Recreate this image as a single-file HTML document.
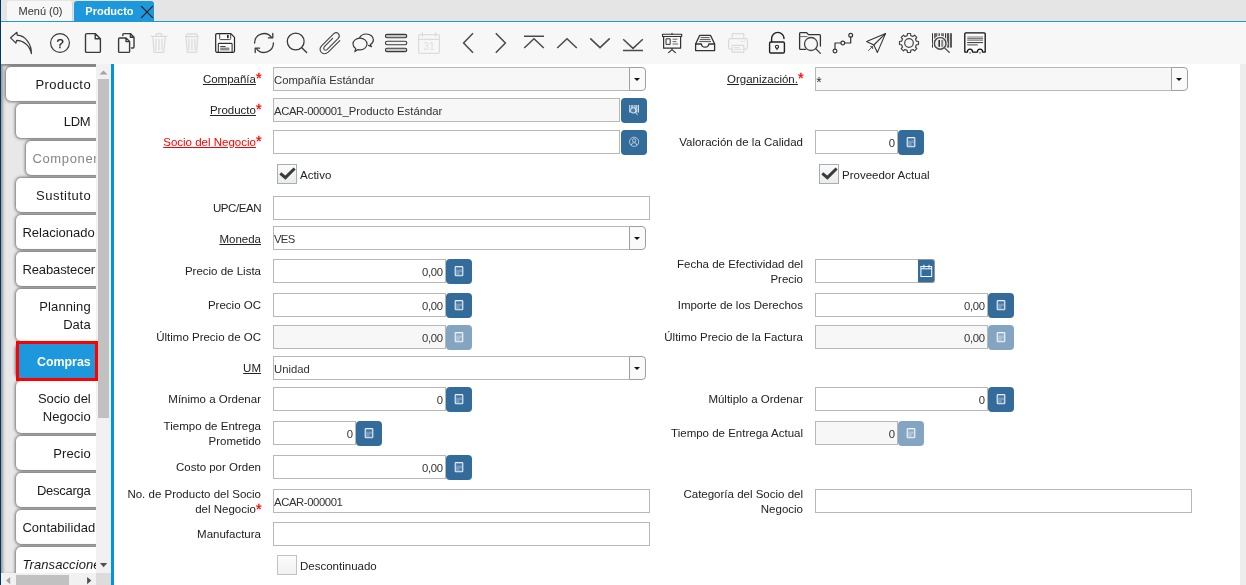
<!DOCTYPE html>
<html lang="es"><head><meta charset="utf-8"><title>Producto</title>
<style>
*{box-sizing:border-box;margin:0;padding:0}
html,body{width:1246px;height:585px;overflow:hidden;background:#fff;font-family:"Liberation Sans",sans-serif;}
body{position:relative;will-change:transform}
.abs{position:absolute}
#leftedge{left:0;top:0;width:1px;height:585px;background:#003366}
#tabbar{left:1px;top:0;width:1245px;height:21px;background:#e5e5e5}
#tabline{left:1px;top:21px;width:1245px;height:1px;background:#1e98dc}
#tab-menu{left:7px;top:1px;width:66px;height:20px;background:#f7f7f7;border-radius:3px 3px 0 0;font-size:11px;color:#333;line-height:20px;padding-left:11.5px;border-right:1px solid #d4d4d4}
#tab-prod{left:74px;top:1px;width:80px;height:21px;background:#1e98dc;border-radius:3px 3px 0 0;font-size:11px;font-weight:bold;color:#fff;line-height:20px;padding-left:11.3px}
#toolbar{left:1px;top:22px;width:1245px;height:42px;background:#f7f7f7}
#side{left:1px;top:64px;width:95px;height:509px;background:#e8e8e8;overflow:hidden;box-shadow:inset 3px 0 3px -1px #999,inset 0 3px 2px -1px #8c8c8c}
.stab{position:absolute;width:120px;height:34px;background:#fff;border-radius:5px 0 0 5px;box-shadow:0 0 3px 1px rgba(0,0,0,.5);font-size:13px;letter-spacing:0.15px;color:#1a1a1a;white-space:nowrap}
.stab span{position:absolute;left:6.4px;text-align:right;line-height:18px;height:18px;display:block}
#vscroll{left:96px;top:64px;width:15px;height:509px;background:#f1f1f1}
#vthumb{left:98px;top:79px;width:11px;height:339px;background:#c1c1c1}
#hscroll{left:1px;top:573px;width:95px;height:12px;background:#f1f1f1}
#hthumb{left:16.3px;top:575px;width:52.5px;height:10px;background:#c1c1c1}
#corner{left:96px;top:573px;width:15px;height:12px;background:#dcdcdc}
#redbox{left:16px;top:341px;width:82px;height:40px;border:3px solid #f00}
#blueline{left:111px;top:64px;width:3px;height:521px;background:#0094dc}
#rightstrip{left:1240px;top:64px;width:6px;height:521px;background:#ededed}
.lbl{position:absolute;font-size:11.5px;color:#222;text-align:right;white-space:nowrap;line-height:15px}
.lbl u{text-decoration:underline;text-underline-offset:1px}
.lbl .req{color:#f00;text-decoration:none;font-size:14.5px;line-height:10px;position:relative;top:0.8px;letter-spacing:-0.6px;-webkit-text-stroke:0.3px #f00}
.inp{position:absolute;height:24px;border:1px solid #b8b8b8;background:#fff;font-size:11.3px;color:#333;line-height:24px;padding-left:0px;white-space:nowrap;overflow:hidden}
.inp.ro{background:#f7f7f7}
.inp.num{text-align:right;padding-right:2.3px;letter-spacing:-0.3px}
.cbtn{position:absolute;width:17px;height:24px;border:1px solid #a0a0a0;border-left:1px solid #a0a0a0;border-radius:0 4px 4px 0;background:#fafafa}
.cbtn:after{content:"";position:absolute;left:4px;top:10px;border-left:3.5px solid transparent;border-right:3.5px solid transparent;border-top:3.5px solid #111}
.bbtn{position:absolute;width:26px;height:25px;background:#336b9b;border-radius:4px}
.bbtn.dis{opacity:.6}
.calbtn{position:absolute;width:17px;height:24px;background:#336b9b;border:1px solid #9a948e;border-left:none;border-radius:0 3px 3px 0}
.chk{position:absolute;width:20px;height:20px;border:1px solid #a4aeb9;background:linear-gradient(#fbfbfb,#ebebeb)}
.chk.off{border-color:#c2c2c2;background:linear-gradient(#fcfcfc,#f1f1f1)}
.tight{letter-spacing:-0.4px}
.chklbl{position:absolute;font-size:11.5px;color:#222;line-height:15px;white-space:nowrap}
</style></head>
<body>
<div class="abs" id="tabbar"></div>
<div class="abs" id="tab-menu">Menú (0)</div>
<div class="abs" id="tab-prod">Producto<svg class="abs" style="left:66px;top:4px" width="14" height="14" viewBox="0 0 14 14"><path d="M1.2 1.2L12.8 12.8M12.8 1.2L1.2 12.8" stroke="#1a1a1a" stroke-width="1.15" fill="none"/></svg></div>
<div class="abs" id="tabline"></div>
<div class="abs" id="toolbar"></div>
<svg class="abs" style="left:0;top:22px" width="1000" height="42" viewBox="0 22 1000 42" fill="none" stroke="#3a3a3a" stroke-width="1.3" stroke-linejoin="round" stroke-linecap="round">
<!-- 1 undo -->
<path d="M16.9 32.3L10.6 37.8L15.9 43.2L16.6 40.4C23 40.6 29.5 44.5 31.4 53.6C31.6 43.5 25 35.6 17.3 35.2Z" stroke-width="1.2"/>
<!-- 2 help -->
<circle cx="60" cy="43" r="9.4" stroke-width="1.2"/>
<text x="60" y="47.6" font-family="Liberation Sans, sans-serif" font-size="13" text-anchor="middle" fill="#222" stroke="#222" stroke-width="0.25">?</text>
<!-- 3 new -->
<path d="M86.5 33.6H95.2L100.4 38.8V51.2Q100.4 52.4 99.2 52.4H86.7Q85.5 52.4 85.5 51.2V34.8Q85.5 33.6 86.7 33.6ZM95.2 33.8V38.8H100.2" stroke-width="1.4"/>
<!-- 4 copy -->
<path d="M119.6 38H126L129.6 41.6V51.4Q129.6 52.4 128.6 52.4H119.6Q118.6 52.4 118.6 51.4V39Q118.6 38 119.6 38ZM126 38.2V41.6H129.4" stroke-width="1.4"/>
<path d="M122.8 35.6V34.6Q122.8 33.6 123.8 33.6H130.4L134 37.2V47Q134 48 133 48H131.6M130.4 33.8V37.2H133.8" stroke-width="1.4"/>
<!-- 5 delete (disabled) -->
<g stroke="#dadada" stroke-width="1.2">
<path d="M151.2 36.4H166.8M156.4 36.2V34.4Q156.4 33.6 157.2 33.6H160.8Q161.6 33.6 161.6 34.4V36.2M152.8 36.6L154 51.4Q154.1 52.4 155 52.4H163Q163.9 52.4 164 51.4L165.2 36.6M156 39V50M159 39V50M162 39V50"/>
<!-- 6 delete selection (disabled) -->
<path d="M185.6 36.6L187.2 34.2L189.2 33.4L190.6 34.6L192 33.4L193.6 34.4L195 33.6L196.8 34.4L198.2 36.6ZM186 36.8L187.2 51.4Q187.3 52.4 188.2 52.4H195.6Q196.5 52.4 196.6 51.4L197.8 36.8M189 39V50M192 39V50M195 39V50"/>
</g>
<!-- 7 save -->
<g stroke="#222" stroke-width="1.2">
<path d="M216.9 33.6H230.8L234.5 37.3V51.1Q234.5 52.3 233.3 52.3H216.9Q215.7 52.3 215.7 51.1V34.8Q215.7 33.6 216.9 33.6Z" fill="#fdfdfd"/>
<path d="M219.7 33.8V38.7Q219.7 39.6 220.6 39.6H229.8Q230.7 39.6 230.7 38.7V33.8" stroke-width="1" stroke="#444"/>
<path d="M218.3 52.1V44.3Q218.3 43.4 219.2 43.4H231.2Q232.1 43.4 232.1 44.3V52.1" stroke-width="1.1" stroke="#333"/>
</g>
<rect x="227.1" y="35" width="1.5" height="3.2" fill="#111" stroke="none"/>
<rect x="220.2" y="46" width="5.4" height="1" fill="#444" stroke="none"/>
<rect x="220.2" y="47.5" width="9.2" height="2.9" fill="#8a8a8a" stroke="none"/>
<!-- 8 refresh -->
<path d="M254.6 43A9.4 9.4 0 0 1 271.4 37.2M273.4 43A9.4 9.4 0 0 1 256.6 48.8" stroke-width="1.3"/>
<path d="M272.8 33.4V37.8H268.4M255.2 52.6V48.2H259.6" stroke-width="1.3"/>
<!-- 9 search -->
<circle cx="295.7" cy="41.5" r="8.4" stroke-width="1.3"/>
<path d="M301.8 47.8L306.6 52.4" stroke-width="1.4"/>
<!-- 10 attachment -->
<path d="M339.8 40.6L328.2 52.2Q324.6 55.2 321.4 52.4Q318.6 49.2 321.6 45.8L333.8 33.6Q336.2 31.6 338.4 33.6Q340.4 36 338.2 38.4L327 49.6Q325.4 50.8 324.2 49.6Q323 48.2 324.4 46.6L332.6 38.4" stroke-width="1.1" stroke="#444"/>
<!-- 11 chat -->
<path d="M359.4 38.2C360.4 35.6 363.2 34 366.4 34C370.4 34 373.4 36.6 373.4 39.8C373.4 41.8 372.2 43.6 370.4 44.6L371.4 46.8L368.6 45.4" stroke-width="1.2"/>
<path d="M360 38.2C356.1 38.2 353 40.8 353 44C353 45.9 354.1 47.6 355.8 48.7L354.8 51.6L358 49.6C358.6 49.7 359.3 49.8 360 49.8C363.9 49.8 367 47.2 367 44C367 40.8 363.9 38.2 360 38.2Z" stroke-width="1.2" fill="#f7f7f7"/>
<!-- 12 list -->
<g stroke="#3a3a3a" stroke-width="1.1">
<rect x="385.4" y="34.4" width="21.4" height="3.4" rx="1.7" fill="#c4c4c4"/>
<rect x="385.4" y="41.3" width="21.4" height="3.4" rx="1.7" fill="#f4f4f4"/>
<rect x="385.4" y="48.2" width="21.4" height="3.4" rx="1.7" fill="#c4c4c4"/>
</g>
<!-- 13 calendar (disabled) -->
<g stroke="#dcdcdc" stroke-width="1.2">
<rect x="418.6" y="34.6" width="20.8" height="18.8" rx="1.2"/>
<path d="M418.8 39.4H439.2M422.4 32.4V36.4M435.6 32.4V36.4"/>
</g>
<text x="429" y="50.4" font-family="Liberation Sans, sans-serif" font-size="10.5" text-anchor="middle" fill="#dedede" stroke="none">31</text>
<!-- 14..19 navigation -->
<g stroke="#4a4a4a" stroke-width="1.5" stroke-linecap="butt" stroke-linejoin="miter">
<path d="M473 33.2L463.6 43L473 52.8"/>
<path d="M495.8 33.2L505.4 43L495.8 52.8"/>
<path d="M524 36.3H544M524.2 48L534 38.8L543.8 48"/>
<path d="M557.2 48L567 38.8L576.8 48"/>
<path d="M590.2 38.4L600 47.6L609.8 38.4"/>
<path d="M623.2 39.2L633 48.4L642.8 39.2M623 50.5H643"/>
</g>
<!-- 20 presentation -->
<g stroke="#333" stroke-width="1.2">
<rect x="662.5" y="34.3" width="19.2" height="2.2" fill="#eee" stroke-width="1.1"/>
<path d="M663.6 36.6V48.2H680.6V36.6M672 48.4V49.6M668.6 52.6L672 49.6L675.4 52.6M672 34.2V33.4"/>
<rect x="666.4" y="38.8" width="3.8" height="5.6" stroke-width="1"/>
<path d="M673 39.2H677M673 41.6H676M673 44H677.6" stroke-width="0.9" stroke="#555"/>
</g>
<!-- 21 inbox -->
<g stroke="#333" stroke-width="1.3">
<path d="M695.6 44L699.6 35.4H710.6L714.6 44"/>
<path d="M695.6 44H701.4C701.6 46 703 47.2 705.1 47.2C707.2 47.2 708.6 46 708.8 44H714.6V50.6H695.6Z"/>
<path d="M701 37.6H709.2M700.2 39.6H710M699.6 41.6H710.6" stroke-width="1" stroke="#555"/>
</g>
<!-- 22 print (disabled) -->
<g stroke="#dadada" stroke-width="1.2">
<path d="M732.2 38.4V33.6H743.8V38.4"/>
<path d="M732 49.2H730.4Q728.6 49.2 728.6 47.4V40.4Q728.6 38.6 730.4 38.6H745.6Q747.4 38.6 747.4 40.4V47.4Q747.4 49.2 745.6 49.2H744"/>
<rect x="732.2" y="45.4" width="11.6" height="6.8"/>
<path d="M734.4 47.6H739M734.4 49.4H741.4" stroke-width="0.9"/>
<path d="M741.4 41.4H741.8M744 41.4H744.4"/>
</g>
<!-- 23 lock -->
<g stroke="#222" stroke-width="1.4">
<rect x="769.6" y="42" width="14.8" height="11" rx="1.2"/>
<path d="M771.6 41.8V38.6A6.2 6.2 0 0 1 784 38.6"/>
<circle cx="777" cy="46.8" r="1.6" stroke-width="1.1"/>
<path d="M777 48.4V49.6" stroke-width="1.1"/>
</g>
<!-- 24 folder search -->
<g stroke="#333" stroke-width="1.3">
<path d="M805.4 49.4H800.6Q799.6 49.4 799.6 48.4V33.6Q799.6 32.6 800.6 32.6H806.6L808.4 34.6H819.4Q820.4 34.6 820.4 35.6V46"/>
<path d="M799.8 36.6H807" stroke-width="1" stroke="#666"/>
<circle cx="811" cy="44" r="6.5" stroke="#444"/>
<path d="M815.8 48.8L820.4 53.4" stroke="#444"/>
</g>
<!-- 25 workflow -->
<g stroke="#333" stroke-width="1.2">
<circle cx="835" cy="51" r="1.9"/><circle cx="842.8" cy="43" r="1.9"/><circle cx="850.7" cy="35.2" r="1.9"/>
<path d="M835 49V43H840.8M844.8 43H850.7V37.2"/>
</g>
<!-- 26 send -->
<g stroke="#333" stroke-width="1.1">
<path d="M885.6 33.4L866.6 41.4L873.8 45L877.4 52.4Z"/>
<path d="M885.4 33.6L873.8 45"/>
<path d="M868.4 50.6L872.6 46.4M870.6 46.6H872.6V48.6" stroke-width="0.8"/>
</g>
<!-- 27 gear -->
<g stroke="#444" stroke-width="1.2">
<path d="M907.2 35.6L907.5 33.5L910.5 33.5L910.8 35.6L913.0 36.5L914.6 35.2L916.8 37.4L915.5 39.0L916.4 41.2L918.5 41.5L918.5 44.5L916.4 44.8L915.5 47.0L916.8 48.6L914.6 50.8L913.0 49.5L910.8 50.4L910.5 52.5L907.5 52.5L907.2 50.4L905.0 49.5L903.4 50.8L901.2 48.6L902.5 47.0L901.6 44.8L899.5 44.5L899.5 41.5L901.6 41.2L902.5 39.0L901.2 37.4L903.4 35.2L905.0 36.5Z" stroke-linejoin="round"/>
<circle cx="909" cy="43" r="4.3"/>
</g>
<!-- 28 barcode search -->
<g stroke="none" fill="#333">
<rect x="932" y="33.2" width="1" height="14.4"/><rect x="934" y="33.2" width="3.4" height="14.4" fill="#666"/><rect x="938.6" y="33.2" width="1.2" height="14.4"/><rect x="941" y="33.2" width="3" height="14.4" fill="#777"/><rect x="945" y="33.2" width="1" height="14.4"/><rect x="946.8" y="33.2" width="2.4" height="14.4" fill="#555"/><rect x="950.2" y="33.2" width="1.6" height="14.4"/>
</g>
<circle cx="940.2" cy="43.4" r="7" fill="none" stroke="#f4f4f4" stroke-width="1.2"/><circle cx="940.2" cy="43.4" r="5.8" fill="#eee" stroke="#4a4a4a" stroke-width="1.4"/>
<rect x="938.4" y="40" width="1.6" height="6.8" fill="#333" stroke="none"/><rect x="941.2" y="40" width="2" height="6.8" fill="#888" stroke="none"/>
<path d="M944.4 47.8L949.4 52.4" stroke="#555" stroke-width="1.3"/>
<!-- 29 receipt -->
<path d="M965.8 32.8H984.2Q985.2 32.8 985.2 33.8V52.1H982.6A2.6 2.9 0 0 0 977.4 52.1H972.6A2.6 2.9 0 0 0 967.4 52.1H964.8V33.8Q964.8 32.8 965.8 32.8Z" stroke="#111" stroke-width="1.3" stroke-linejoin="round" fill="#fbfbfb"/>
<circle cx="970" cy="52.9" r="0.8" fill="#777" stroke="none"/><circle cx="980" cy="52.9" r="0.8" fill="#777" stroke="none"/>
<path d="M967.2 37H983M967.2 38.6H983M967.2 40.2H983" stroke="#7a7a7a" stroke-width="1.1" stroke-linecap="butt"/>
<path d="M967.2 42.6H983" stroke="#1a1a1a" stroke-width="0.9" stroke-linecap="butt"/>
<path d="M967.2 44.9H977.8" stroke="#555" stroke-width="1.1" stroke-linecap="butt"/>
</svg>

<div class="abs" id="side">
<div class="stab" style="left:4.5px;top:3px;height:34px;"><span style="top:9px;width:79.25999999999999px;letter-spacing:0.46px">Producto</span></div>
<div class="stab" style="left:15px;top:40px;height:34px;"><span style="top:9px;width:68.1px;letter-spacing:-0.2px">LDM</span></div>
<div class="stab" style="left:25px;top:77px;height:34px;color:#858585;"><span style="top:9px;width:58.95px;letter-spacing:0.65px">Componente</span></div>
<div class="stab" style="left:15px;top:114px;height:34px;"><span style="top:9px;width:68.8px;letter-spacing:0.5px">Sustituto</span></div>
<div class="stab" style="left:15px;top:151px;height:34px;"><span style="top:9px;width:68.3px;letter-spacing:0px">Relacionado</span></div>
<div class="stab" style="left:15px;top:188px;height:34px;"><span style="top:9px;width:68.2px;letter-spacing:-0.1px">Reabastecer</span></div>
<div class="stab" style="left:15px;top:225px;height:52px;"><span style="top:9px;width:68.42px;letter-spacing:0.12px">Planning</span><span style="top:27px;width:68.3px;letter-spacing:0px">Data</span></div>
<div class="stab" style="left:15px;top:280px;height:34px;background:#1e98dc;color:#fff;font-weight:bold;letter-spacing:0;font-size:12.4px;"><span style="top:9px;width:68.3px;letter-spacing:0px">Compras</span></div>
<div class="stab" style="left:15px;top:317px;height:52px;"><span style="top:9px;width:68.2px;letter-spacing:-0.1px">Socio del</span><span style="top:27px;width:68.34px;letter-spacing:0.04px">Negocio</span></div>
<div class="stab" style="left:15px;top:372px;height:34px;"><span style="top:9px;width:68.39999999999999px;letter-spacing:0.1px">Precio</span></div>
<div class="stab" style="left:15px;top:409px;height:34px;"><span style="top:9px;width:68.02px;letter-spacing:-0.28px">Descarga</span></div>
<div class="stab" style="left:15px;top:446px;height:34px;"><span style="top:9px;width:68.35px;letter-spacing:0.05px">Contabilidad</span></div>
<div class="stab" style="left:15px;top:483px;height:34px;font-style:italic;"><span style="top:9px;width:68.39999999999999px;letter-spacing:0.1px">Transacciones</span></div>
</div>
<div class="abs" id="vscroll"></div><div class="abs" id="vthumb"></div>
<svg class="abs" style="left:96px;top:64px" width="15" height="15"><path d="M3.5 10.5L7.5 6.5L11.5 10.5Z" fill="#a3a3a3"/></svg>
<svg class="abs" style="left:96px;top:558px" width="15" height="15"><path d="M4 5L7.6 9.2L11.2 5Z" fill="#505050"/></svg>
<div class="abs" id="hscroll"></div><div class="abs" id="hthumb"></div>
<div class="abs" id="corner"></div>
<svg class="abs" style="left:1px;top:573px" width="15" height="12"><path d="M9.2 4L5 7.6L9.2 11.2Z" fill="#a3a3a3"/></svg>
<svg class="abs" style="left:81px;top:573px" width="15" height="12"><path d="M6.1 4L10.3 7.6L6.1 11.2Z" fill="#505050"/></svg>
<div class="abs" id="redbox"></div>
<div class="abs" id="blueline"></div>
<div class="abs" id="rightstrip"></div>
<div class="lbl" style="right:985px;top:71.5px;"><u>Compañía</u><span class="req">*</span></div>
<div class="inp ro" style="left:273px;top:67px;width:357px">Compañía Estándar</div>
<div class="cbtn" style="left:629px;top:67px"></div>
<div class="lbl" style="right:443px;top:71.5px;"><u>Organización.</u><span class="req">*</span></div>
<div class="inp ro" style="left:815px;top:67px;width:357px"><span style="position:relative;top:1.5px;left:0.3px;font-size:14px">*</span></div>
<div class="cbtn" style="left:1171px;top:67px"></div>
<div class="lbl" style="right:985px;top:102.5px;"><u>Producto</u><span class="req">*</span></div>
<div class="inp ro" style="left:273px;top:98px;width:347px"><span class="tight">ACAR-000001</span>_Producto Estándar</div>
<div class="bbtn" style="left:621px;top:98px"><svg class="abs" style="left:7px;top:6px" width="13" height="12" viewBox="0 0 13 12"><g fill="#d5e0ea"><rect x="1.2" y="1" width="1" height="7.6"/><rect x="2.8" y="1" width="2.2" height="7.6" opacity=".7"/><rect x="5.6" y="1" width="1" height="5"/><rect x="7.2" y="1" width="1.8" height="7.6" opacity=".8"/><rect x="9.6" y="1" width="1.4" height="7.6"/></g><circle cx="5.2" cy="6.4" r="2.7" fill="#4a7daa" stroke="#e6edf4" stroke-width="1"/><path d="M7.2 8.6L9.6 10.8" stroke="#e6edf4" stroke-width="1"/></svg></div>
<div class="lbl" style="right:985px;top:134.5px;color:#f00;"><u>Socio del Negocio</u><span class="req">*</span></div>
<div class="inp" style="left:273px;top:130px;width:347px"></div>
<div class="bbtn" style="left:621px;top:130px"><svg class="abs" style="left:7px;top:6.2px" width="12" height="12" viewBox="0 0 12 12" fill="none" stroke="#c3d3e2" stroke-width="0.9"><circle cx="6.1" cy="5.8" r="4.6"/><circle cx="6.1" cy="4.4" r="1.7"/><path d="M3.4 9.2Q3.6 6.6 6.1 6.6Q8.6 6.6 8.8 9.2"/></svg></div>
<div class="lbl" style="right:443px;top:134.5px;">Valoración de la Calidad</div>
<div class="inp num" style="left:815px;top:130px;width:83px">0</div>
<div class="bbtn" style="left:898px;top:130px"><svg class="abs" style="left:8px;top:6px" width="11" height="13" viewBox="0 0 11 13"><rect x="1.2" y="1.5" width="7.6" height="9.3" rx="0.8" fill="rgba(255,255,255,.32)" stroke="#e6edf4" stroke-width="1.1"/><rect x="2.3" y="3.2" width="5.4" height="1.3" fill="#336b9b"/><rect x="5.7" y="7" width="1.9" height="2.7" fill="rgba(51,107,155,.75)"/></svg></div>
<div class="chk" style="left:277px;top:164px"><svg class="abs" style="left:0;top:0" width="18" height="18" viewBox="0 0 18 18"><path d="M2.3 8.3L7.4 12.6L16.6 3.5" stroke="#3a3a3a" stroke-width="3" fill="none"/></svg></div>
<div class="chklbl" style="left:300px;top:168px">Activo</div>
<div class="chk" style="left:819px;top:164px"><svg class="abs" style="left:0;top:0" width="18" height="18" viewBox="0 0 18 18"><path d="M2.3 8.3L7.4 12.6L16.6 3.5" stroke="#3a3a3a" stroke-width="3" fill="none"/></svg></div>
<div class="chklbl" style="left:842px;top:168px">Proveedor Actual</div>
<div class="lbl" style="right:985px;top:200.5px;"><span style="letter-spacing:-0.45px">UPC/EAN</span></div>
<div class="inp" style="left:273px;top:196px;width:377px"></div>
<div class="lbl" style="right:985px;top:231.5px;"><u>Moneda</u></div>
<div class="inp" style="left:273px;top:226px;width:357px"><span style="letter-spacing:-0.7px">VES</span></div>
<div class="cbtn" style="left:629px;top:226px"></div>
<div class="lbl" style="right:985px;top:263.5px;">Precio de Lista</div>
<div class="inp num" style="left:273px;top:259px;width:173px">0,00</div>
<div class="bbtn" style="left:446px;top:259px"><svg class="abs" style="left:8px;top:6px" width="11" height="13" viewBox="0 0 11 13"><rect x="1.2" y="1.5" width="7.6" height="9.3" rx="0.8" fill="rgba(255,255,255,.32)" stroke="#e6edf4" stroke-width="1.1"/><rect x="2.3" y="3.2" width="5.4" height="1.3" fill="#336b9b"/><rect x="5.7" y="7" width="1.9" height="2.7" fill="rgba(51,107,155,.75)"/></svg></div>
<div class="lbl" style="right:443px;top:257.0px;">Fecha de Efectividad del<br>Precio</div>
<div class="inp" style="left:815px;top:259px;width:104px"></div>
<div class="calbtn" style="left:918px;top:259px"><svg class="abs" style="left:2px;top:4px" width="13" height="14" viewBox="0 0 13 14" fill="none" stroke="#fff" stroke-width="1"><rect x="0.9" y="2.5" width="10.8" height="10"/><path d="M1 4.8H11.6M3.9 0.8V4.6M9 0.8V4.6"/></svg></div>
<div class="lbl" style="right:985px;top:297.5px;">Precio OC</div>
<div class="inp num" style="left:273px;top:293px;width:173px">0,00</div>
<div class="bbtn" style="left:446px;top:293px"><svg class="abs" style="left:8px;top:6px" width="11" height="13" viewBox="0 0 11 13"><rect x="1.2" y="1.5" width="7.6" height="9.3" rx="0.8" fill="rgba(255,255,255,.32)" stroke="#e6edf4" stroke-width="1.1"/><rect x="2.3" y="3.2" width="5.4" height="1.3" fill="#336b9b"/><rect x="5.7" y="7" width="1.9" height="2.7" fill="rgba(51,107,155,.75)"/></svg></div>
<div class="lbl" style="right:443px;top:297.5px;">Importe de los Derechos</div>
<div class="inp num" style="left:815px;top:293px;width:173px">0,00</div>
<div class="bbtn" style="left:988px;top:293px"><svg class="abs" style="left:8px;top:6px" width="11" height="13" viewBox="0 0 11 13"><rect x="1.2" y="1.5" width="7.6" height="9.3" rx="0.8" fill="rgba(255,255,255,.32)" stroke="#e6edf4" stroke-width="1.1"/><rect x="2.3" y="3.2" width="5.4" height="1.3" fill="#336b9b"/><rect x="5.7" y="7" width="1.9" height="2.7" fill="rgba(51,107,155,.75)"/></svg></div>
<div class="lbl" style="right:985px;top:329.5px;">Último Precio de OC</div>
<div class="inp ro num" style="left:273px;top:325px;width:173px">0,00</div>
<div class="bbtn dis" style="left:446px;top:325px"><svg class="abs" style="left:8px;top:6px" width="11" height="13" viewBox="0 0 11 13"><rect x="1.2" y="1.5" width="7.6" height="9.3" rx="0.8" fill="rgba(255,255,255,.32)" stroke="#e6edf4" stroke-width="1.1"/><rect x="2.3" y="3.2" width="5.4" height="1.3" fill="#336b9b"/><rect x="5.7" y="7" width="1.9" height="2.7" fill="rgba(51,107,155,.75)"/></svg></div>
<div class="lbl" style="right:443px;top:329.5px;">Último Precio de la Factura</div>
<div class="inp ro num" style="left:815px;top:325px;width:173px">0,00</div>
<div class="bbtn dis" style="left:988px;top:325px"><svg class="abs" style="left:8px;top:6px" width="11" height="13" viewBox="0 0 11 13"><rect x="1.2" y="1.5" width="7.6" height="9.3" rx="0.8" fill="rgba(255,255,255,.32)" stroke="#e6edf4" stroke-width="1.1"/><rect x="2.3" y="3.2" width="5.4" height="1.3" fill="#336b9b"/><rect x="5.7" y="7" width="1.9" height="2.7" fill="rgba(51,107,155,.75)"/></svg></div>
<div class="lbl" style="right:985px;top:360.5px;"><u>UM</u></div>
<div class="inp" style="left:273px;top:356px;width:357px">Unidad</div>
<div class="cbtn" style="left:629px;top:356px"></div>
<div class="lbl" style="right:985px;top:391.5px;">Mínimo a Ordenar</div>
<div class="inp num" style="left:273px;top:387px;width:173px">0</div>
<div class="bbtn" style="left:446px;top:387px"><svg class="abs" style="left:8px;top:6px" width="11" height="13" viewBox="0 0 11 13"><rect x="1.2" y="1.5" width="7.6" height="9.3" rx="0.8" fill="rgba(255,255,255,.32)" stroke="#e6edf4" stroke-width="1.1"/><rect x="2.3" y="3.2" width="5.4" height="1.3" fill="#336b9b"/><rect x="5.7" y="7" width="1.9" height="2.7" fill="rgba(51,107,155,.75)"/></svg></div>
<div class="lbl" style="right:443px;top:391.5px;">Múltiplo a Ordenar</div>
<div class="inp num" style="left:815px;top:387px;width:173px">0</div>
<div class="bbtn" style="left:988px;top:387px"><svg class="abs" style="left:8px;top:6px" width="11" height="13" viewBox="0 0 11 13"><rect x="1.2" y="1.5" width="7.6" height="9.3" rx="0.8" fill="rgba(255,255,255,.32)" stroke="#e6edf4" stroke-width="1.1"/><rect x="2.3" y="3.2" width="5.4" height="1.3" fill="#336b9b"/><rect x="5.7" y="7" width="1.9" height="2.7" fill="rgba(51,107,155,.75)"/></svg></div>
<div class="lbl" style="right:985px;top:419.0px;">Tiempo de Entrega<br>Prometido</div>
<div class="inp num" style="left:273px;top:421px;width:83px">0</div>
<div class="bbtn" style="left:356px;top:421px"><svg class="abs" style="left:8px;top:6px" width="11" height="13" viewBox="0 0 11 13"><rect x="1.2" y="1.5" width="7.6" height="9.3" rx="0.8" fill="rgba(255,255,255,.32)" stroke="#e6edf4" stroke-width="1.1"/><rect x="2.3" y="3.2" width="5.4" height="1.3" fill="#336b9b"/><rect x="5.7" y="7" width="1.9" height="2.7" fill="rgba(51,107,155,.75)"/></svg></div>
<div class="lbl" style="right:443px;top:425.5px;">Tiempo de Entrega Actual</div>
<div class="inp ro num" style="left:815px;top:421px;width:83px">0</div>
<div class="bbtn dis" style="left:898px;top:421px"><svg class="abs" style="left:8px;top:6px" width="11" height="13" viewBox="0 0 11 13"><rect x="1.2" y="1.5" width="7.6" height="9.3" rx="0.8" fill="rgba(255,255,255,.32)" stroke="#e6edf4" stroke-width="1.1"/><rect x="2.3" y="3.2" width="5.4" height="1.3" fill="#336b9b"/><rect x="5.7" y="7" width="1.9" height="2.7" fill="rgba(51,107,155,.75)"/></svg></div>
<div class="lbl" style="right:985px;top:459.5px;">Costo por Orden</div>
<div class="inp num" style="left:273px;top:455px;width:173px">0,00</div>
<div class="bbtn" style="left:446px;top:455px"><svg class="abs" style="left:8px;top:6px" width="11" height="13" viewBox="0 0 11 13"><rect x="1.2" y="1.5" width="7.6" height="9.3" rx="0.8" fill="rgba(255,255,255,.32)" stroke="#e6edf4" stroke-width="1.1"/><rect x="2.3" y="3.2" width="5.4" height="1.3" fill="#336b9b"/><rect x="5.7" y="7" width="1.9" height="2.7" fill="rgba(51,107,155,.75)"/></svg></div>
<div class="lbl" style="right:985px;top:487.0px;">No. de Producto del Socio<br>del Negocio<span class="req">*</span></div>
<div class="inp" style="left:273px;top:489px;width:377px"><span class="tight">ACAR-000001</span></div>
<div class="lbl" style="right:443px;top:487.0px;">Categoría del Socio del<br>Negocio</div>
<div class="inp" style="left:815px;top:489px;width:377px"></div>
<div class="lbl" style="right:985px;top:526.5px;">Manufactura</div>
<div class="inp" style="left:273px;top:522px;width:377px"></div>
<div class="chk off" style="left:277px;top:555px"></div>
<div class="chklbl" style="left:300px;top:559px">Descontinuado</div>
<div class="abs" id="leftedge"></div>
</body></html>
